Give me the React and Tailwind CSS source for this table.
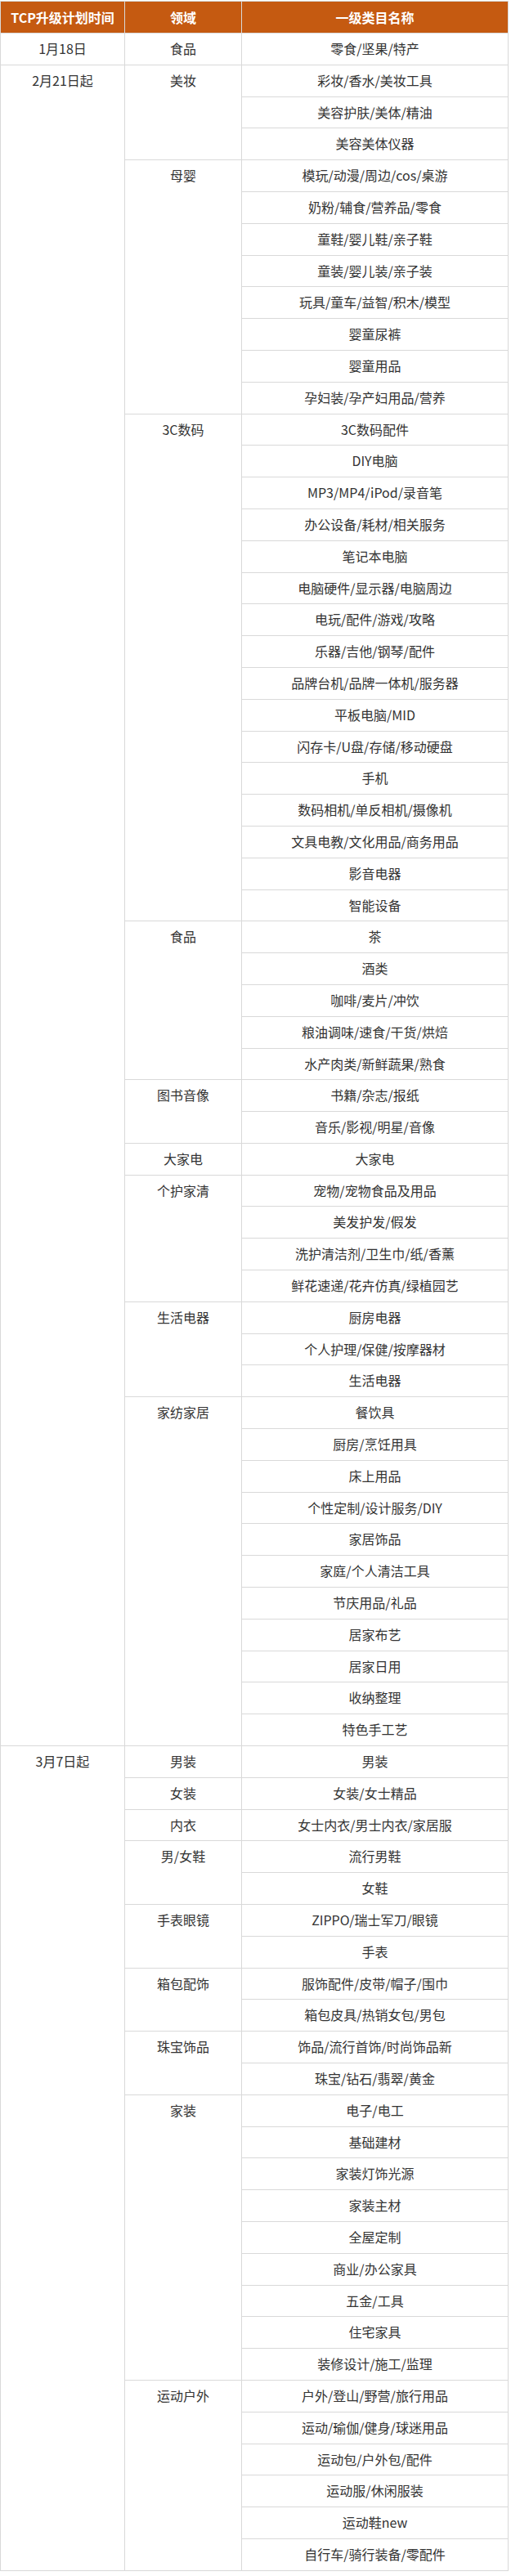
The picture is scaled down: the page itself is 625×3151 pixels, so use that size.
import React from "react";

const groups = [
  {
    date: "1月18日",
    sections: [{ name: "食品", items: ["零食/坚果/特产"] }],
  },
  {
    date: "2月21日起",
    sections: [
      { name: "美妆", items: ["彩妆/香水/美妆工具", "美容护肤/美体/精油", "美容美体仪器"] },
      {
        name: "母婴",
        items: [
          "模玩/动漫/周边/cos/桌游",
          "奶粉/辅食/营养品/零食",
          "童鞋/婴儿鞋/亲子鞋",
          "童装/婴儿装/亲子装",
          "玩具/童车/益智/积木/模型",
          "婴童尿裤",
          "婴童用品",
          "孕妇装/孕产妇用品/营养",
        ],
      },
      {
        name: "3C数码",
        items: [
          "3C数码配件",
          "DIY电脑",
          "MP3/MP4/iPod/录音笔",
          "办公设备/耗材/相关服务",
          "笔记本电脑",
          "电脑硬件/显示器/电脑周边",
          "电玩/配件/游戏/攻略",
          "乐器/吉他/钢琴/配件",
          "品牌台机/品牌一体机/服务器",
          "平板电脑/MID",
          "闪存卡/U盘/存储/移动硬盘",
          "手机",
          "数码相机/单反相机/摄像机",
          "文具电教/文化用品/商务用品",
          "影音电器",
          "智能设备",
        ],
      },
      {
        name: "食品",
        items: ["茶", "酒类", "咖啡/麦片/冲饮", "粮油调味/速食/干货/烘焙", "水产肉类/新鲜蔬果/熟食"],
      },
      { name: "图书音像", items: ["书籍/杂志/报纸", "音乐/影视/明星/音像"] },
      { name: "大家电", items: ["大家电"] },
      {
        name: "个护家清",
        items: ["宠物/宠物食品及用品", "美发护发/假发", "洗护清洁剂/卫生巾/纸/香薰", "鲜花速递/花卉仿真/绿植园艺"],
      },
      { name: "生活电器", items: ["厨房电器", "个人护理/保健/按摩器材", "生活电器"] },
      {
        name: "家纺家居",
        items: [
          "餐饮具",
          "厨房/烹饪用具",
          "床上用品",
          "个性定制/设计服务/DIY",
          "家居饰品",
          "家庭/个人清洁工具",
          "节庆用品/礼品",
          "居家布艺",
          "居家日用",
          "收纳整理",
          "特色手工艺",
        ],
      },
    ],
  },
  {
    date: "3月7日起",
    sections: [
      { name: "男装", items: ["男装"] },
      { name: "女装", items: ["女装/女士精品"] },
      { name: "内衣", items: ["女士内衣/男士内衣/家居服"] },
      { name: "男/女鞋", items: ["流行男鞋", "女鞋"] },
      { name: "手表眼镜", items: ["ZIPPO/瑞士军刀/眼镜", "手表"] },
      { name: "箱包配饰", items: ["服饰配件/皮带/帽子/围巾", "箱包皮具/热销女包/男包"] },
      { name: "珠宝饰品", items: ["饰品/流行首饰/时尚饰品新", "珠宝/钻石/翡翠/黄金"] },
      {
        name: "家装",
        items: [
          "电子/电工",
          "基础建材",
          "家装灯饰光源",
          "家装主材",
          "全屋定制",
          "商业/办公家具",
          "五金/工具",
          "住宅家具",
          "装修设计/施工/监理",
        ],
      },
      {
        name: "运动户外",
        items: [
          "户外/登山/野营/旅行用品",
          "运动/瑜伽/健身/球迷用品",
          "运动包/户外包/配件",
          "运动服/休闲服装",
          "运动鞋new",
          "自行车/骑行装备/零配件",
        ],
      },
    ],
  },
];

const cell = "border border-[#d9d9d9] p-0 align-top text-center";
const inner = "h-[37px] leading-[37px]";

function buildRows() {
  const rows = [];
  groups.forEach((g) => {
    const total = g.sections.reduce((n, s) => n + s.items.length, 0);
    g.sections.forEach((s, si) => {
      s.items.forEach((item, ii) => {
        rows.push(
          <tr key={`${g.date}-${s.name}-${ii}`} className="h-[38.8px]">
            {si === 0 && ii === 0 && (
              <td rowSpan={total} className={cell}>
                <div className={inner}>{g.date}</div>
              </td>
            )}
            {ii === 0 && (
              <td rowSpan={s.items.length} className={cell}>
                <div className={inner}>{s.name}</div>
              </td>
            )}
            <td className={`${cell} align-middle`}>
              <div className={inner}>{item}</div>
            </td>
          </tr>
        );
      });
    });
  });
  return rows;
}

export default function App() {
  return (
    <div
      className="w-[625px] bg-white pt-[1px] text-[16px] text-[#333333]"
      style={{ fontFamily: '"Noto Sans CJK SC", "Noto Sans", sans-serif' }}
    >
      <table className="w-[621px] table-fixed border-collapse">
        <colgroup>
          <col className="w-[152px]" />
          <col className="w-[143px]" />
          <col className="w-[326px]" />
        </colgroup>
        <thead>
          <tr className="h-[39px] bg-[#c55a11] text-white">
            <th className="border border-[#d9d9d9] p-0 text-center font-bold">TCP升级计划时间</th>
            <th className="border border-[#d9d9d9] p-0 text-center font-bold">领域</th>
            <th className="border border-[#d9d9d9] p-0 text-center font-bold">一级类目名称</th>
          </tr>
        </thead>
        <tbody>{buildRows()}</tbody>
      </table>
    </div>
  );
}
